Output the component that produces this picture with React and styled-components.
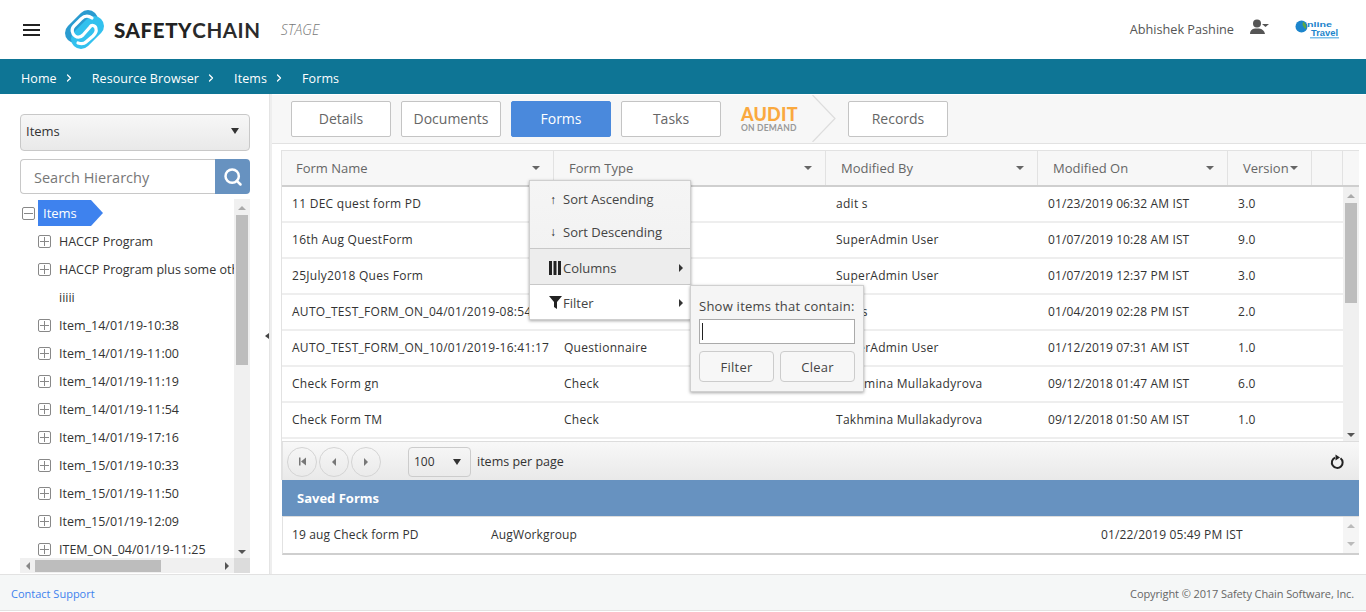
import React from "react";
import styled, { createGlobalStyle } from "styled-components";
import { ChevronRight, Search } from "lucide-react";

const Global = createGlobalStyle`
  html, body { margin: 0; padding: 0; background: #fff; }
  body { font-family: "Open Sans", "Noto Sans", sans-serif; font-size: 13px; color: #333; }
  * { box-sizing: border-box; }
`;

const Page = styled.div`
  width: 1366px;
  height: 612px;
  display: flex;
  flex-direction: column;
  overflow: hidden;
`;

const Header = styled.header`
  height: 59px;
  display: flex;
  align-items: center;
  padding: 0 27px 0 23px;
`;
const Burger = styled.div`
  width: 17px;
  height: 12px;
  margin-right: 24px;
  border-top: 2px solid #222;
  border-bottom: 2px solid #222;
  position: relative;
  &::after {
    content: "";
    position: absolute;
    left: 0;
    right: 0;
    top: 3px;
    height: 2px;
    background: #222;
  }
`;
const Brand = styled.div`
  font-family: "Lato", sans-serif;
  font-size: 20.5px;
  font-weight: 900;
  color: #222;
  margin-left: 9px;
  letter-spacing: 0.6px;
  span { font-weight: 700; color: #2b2b2b; }
`;
const Stage = styled.div`
  font-family: "Open Sans", sans-serif;
  font-style: italic;
  font-size: 14px;
  font-weight: 300;
  color: #777;
  margin-left: 20px;
`;
const UserBox = styled.div`
  margin-left: auto;
  display: flex;
  align-items: center;
  color: #555;
  font-size: 12.7px;
  padding-bottom: 1px;
`;
const UserIcon = styled.svg`
  margin: -4px 26px 0 16px;
`;
const Crumbs = styled.nav`
  height: 35px;
  background: #0e7595;
  display: flex;
  align-items: center;
  padding: 3px 0 0 21px;
  color: #fff;
  font-size: 12.5px;
  letter-spacing: 0.1px;
`;
const Crumb = styled.span`
  display: inline-flex;
  align-items: center;
  svg { margin: 0 17px 0 6px; }
`;

const Main = styled.div`
  flex: 1;
  display: flex;
  min-height: 0;
`;
const Side = styled.aside`
  width: 270px;
  padding: 20px 19px 0 20px;
  display: flex;
  flex-direction: column;
  border-right: 1px solid #e4e4e4;
  position: relative;
  flex-shrink: 0;
`;
const Collapse = styled.div`
  position: absolute;
  left: 265px;
  top: 239px;
  width: 0;
  height: 0;
  border-top: 3px solid transparent;
  border-bottom: 3px solid transparent;
  border-right: 4px solid #444;
`;
const SideSelect = styled.div`
  height: 37px;
  border: 1px solid #c8c8c8;
  border-radius: 4px;
  background: linear-gradient(#f7f7f7, #e9e9e9);
  display: flex;
  align-items: center;
  justify-content: space-between;
  padding: 0 10px 3px 5px;
  font-size: 13px;
`;
const Caret = styled.i`
  width: 0;
  height: 0;
  border-left: 4px solid transparent;
  border-right: 4px solid transparent;
  border-top: 6px solid ${p => p.$c || "#333"};
  display: block;
`;
const SearchRow = styled.div`
  margin-top: 8px;
  height: 35px;
  display: flex;
`;
const SearchInput = styled.div`
  flex: 1;
  border: 1px solid #c8c8c8;
  border-right: none;
  border-radius: 4px 0 0 4px;
  color: #777;
  font-size: 14.5px;
  display: flex;
  align-items: center;
  padding: 1px 0 0 13px;
`;
const SearchBtn = styled.div`
  width: 35px;
  background: #6792c0;
  border-radius: 0 4px 4px 0;
  display: flex;
  align-items: center;
  justify-content: center;
`;
const TreeFrame = styled.div`
  margin-top: 5px;
  height: 374px;
  display: grid;
  grid-template-columns: 214px 16px;
  grid-template-rows: 359px 15px;
`;
const TreeList = styled.div`
  overflow: hidden;
  padding-top: 1px;
`;
const RootRow = styled.div`
  height: 26px;
  display: flex;
  align-items: center;
  padding-left: 2px;
  margin-bottom: 1px;
`;
const TreeRow = styled.div`
  height: 28px;
  display: flex;
  align-items: center;
  padding-left: 18px;
  font-size: 12.5px;
  color: #333;
  white-space: nowrap;
`;
const Plain = styled(TreeRow)`
  padding-left: 39px;
`;
const Toggle = styled.span`
  width: 13px;
  height: 13px;
  border: 1px solid #888;
  border-radius: 2px;
  margin-right: 8px;
  flex-shrink: 0;
  position: relative;
  &::before {
    content: "";
    position: absolute;
    left: 1px;
    right: 1px;
    top: 5px;
    height: 1px;
    background: #888;
  }
  &::after {
    content: "";
    display: ${p => (p.$open ? "none" : "block")};
    position: absolute;
    top: 1px;
    bottom: 1px;
    left: 5px;
    width: 1px;
    background: #888;
  }
`;
const RootLabel = styled.span`
  height: 26px;
  width: 65px;
  margin-left: -5px;
  background: #3e82ee;
  color: #fff;
  font-size: 13px;
  display: flex;
  align-items: center;
  padding-left: 5px;
  clip-path: polygon(0 0, 53px 0, 65px 50%, 53px 100%, 0 100%);
`;
const VBar = styled.div`
  background: #f0f0f0;
  display: flex;
  flex-direction: column;
  align-items: center;
  padding-top: 7px;
  position: relative;
`;
const Thumb = styled.div`
  width: 12px;
  height: ${p => p.$h}px;
  background: #bdbdbd;
  margin-top: 5px;
`;
const Tri = styled.i`
  display: block;
  width: 0;
  height: 0;
  ${p => p.$dir === "up" && `border-left:4px solid transparent;border-right:4px solid transparent;border-bottom:4px solid ${p.$c || "#aaa"};`}
  ${p => p.$dir === "down" && `border-left:4px solid transparent;border-right:4px solid transparent;border-top:4px solid ${p.$c || "#555"};`}
  ${p => p.$dir === "left" && `border-top:4px solid transparent;border-bottom:4px solid transparent;border-right:4px solid ${p.$c || "#888"};`}
  ${p => p.$dir === "right" && `border-top:4px solid transparent;border-bottom:4px solid transparent;border-left:4px solid ${p.$c || "#555"};`}
`;
const DownEnd = styled.div`
  position: absolute;
  bottom: 4px;
`;
const HBar = styled.div`
  background: #f0f0f0;
  display: flex;
  align-items: center;
  padding: 0 5px 0 6px;
  justify-content: space-between;
`;
const HThumb = styled.div`
  width: 126px;
  height: 12px;
  background: #bdbdbd;
  margin: 0 auto 0 5px;
`;
const Corner = styled.div`
  background: #dcdcdc;
`;

const Content = styled.section`
  flex: 1;
  min-width: 0;
  border-left: 2px solid #eee;
  display: flex;
  flex-direction: column;
  position: relative;
`;
const TabStrip = styled.div`
  height: 49px;
  margin-top: 1px;
  background: #f7f7f7;
  border-bottom: 1px solid #e2e2e2;
  padding: 6px 0 0 19px;
  display: flex;
  align-items: flex-start;
  gap: 10px;
`;
const Tab = styled.div`
  width: 100px;
  height: 36px;
  padding-bottom: 2px;
  border: 1px solid ${p => (p.$active ? "#4a89dc" : "#c4c4c4")};
  border-radius: 2px;
  background: ${p => (p.$active ? "#4a89dc" : "#fff")};
  color: ${p => (p.$active ? "#fff" : "#666")};
  font-size: 14px;
  display: flex;
  align-items: center;
  justify-content: center;
`;
const Audit = styled.div`
  margin-left: 10px;
  width: 55px;
  padding-top: 4px;
  font-family: "Lato", sans-serif;
  color: #faa93f;
  font-size: 18px;
  line-height: 18px;
  font-weight: 900;
  letter-spacing: 0.2px;
  small {
    display: block;
    color: #999;
    font-size: 8.5px;
    line-height: 9px;
    font-weight: 700;
    letter-spacing: 0.2px;
    margin-top: 1px;
    white-space: nowrap;
  }
`;
const Arrow = styled.svg`
  margin: -6px 2px 0 6px;
`;

const Grid = styled.div`
  margin: 6px 7px 0 9px;
  border-left: 1px solid #e2e2e2;
  border-top: 1px solid #e2e2e2;
`;
const HeadRow = styled.div`
  height: 36px;
  display: grid;
  grid-template-columns: 272px 272px 212px 190px 84px 31px 16px;
  background: #f7f7f7;
  border-bottom: 2px solid #cfcfcf;
`;
const HeadCell = styled.div`
  display: flex;
  align-items: center;
  justify-content: space-between;
  padding: 0 13px 0 15px;
  border-right: 1px solid #e2e2e2;
  color: #666;
  font-size: 13px;
  &:first-child { padding-left: 14px; }
`;
const SmallCaret = styled.i`
  width: 0;
  height: 0;
  border-left: 4px solid transparent;
  border-right: 4px solid transparent;
  border-top: 4px solid #666;
  display: block;
`;
const Rows = styled.div`
  height: 255px;
  display: flex;
  border-bottom: 1px solid #ddd;
`;
const RowList = styled.div`
  width: 1061px;
`;
const Row = styled.div`
  height: 36px;
  display: grid;
  grid-template-columns: 272px 272px 212px 190px 115px;
  border-bottom: 2px solid #eee;
  align-items: center;
  padding-bottom: 2px;
  font-size: 12px;
  color: #333;
`;
const Cell = styled.div`
  padding-left: 10px;
  white-space: nowrap;
  letter-spacing: 0.28px;
  &:nth-child(4) { letter-spacing: 0.12px; }
`;
const ScrollY = styled.div`
  width: 16px;
  background: #f0f0f0;
  display: flex;
  flex-direction: column;
  align-items: center;
  padding-top: 7px;
  position: relative;
`;
const Pager = styled.div`
  height: 38px;
  background: linear-gradient(#f8f8f8, #e9e9e9);
  display: flex;
  align-items: center;
  padding: 1px 14px 0 4px;
  gap: 2px;
  font-size: 12.5px;
  border-left: 1px solid #e2e2e2;
`;
const RoundBtn = styled.div`
  width: 30px;
  height: 30px;
  border: 1px solid #d4d4d4;
  border-radius: 50%;
  display: flex;
  align-items: center;
  justify-content: center;
  color: #777;
`;
const PageSize = styled.div`
  width: 63px;
  height: 30px;
  margin: 0 4px 0 25px;
  border: 1px solid #ccc;
  border-radius: 4px;
  display: flex;
  align-items: center;
  justify-content: space-between;
  padding: 0 9px 0 5px;
  font-size: 12px;
`;
const Refresh = styled.div`
  margin-left: auto;
  display: flex;
`;
const SavedHead = styled.div`
  height: 36px;
  background: #6792c0;
  color: #fff;
  font-weight: 700;
  font-size: 13px;
  display: flex;
  align-items: center;
  padding-left: 15px;
`;
const SavedWrap = styled.div`
  margin: 0 7px 0 10px;
`;
const SavedBody = styled.div`
  height: 39px;
  display: flex;
  border-bottom: 2px solid #cfcfcf;
  border-left: 1px solid #e2e2e2;
  border-top: 1px solid #ddd;
`;
const SavedRow = styled.div`
  flex: 1;
  display: grid;
  grid-template-columns: 199px 610px 1fr;
  align-items: center;
  font-size: 12px;
  letter-spacing: 0.15px;
  padding: 0 0 2px 9px;
`;
const SavedScroll = styled.div`
  width: 16px;
  background: #f5f5f5;
  display: flex;
  flex-direction: column;
  align-items: center;
  justify-content: center;
  gap: 14px;
`;

const Menu = styled.div`
  position: absolute;
  left: 257px;
  top: 86px;
  width: 162px;
  background: linear-gradient(#f5f5f5, #efefef);
  border: 1px solid #cfcfcf;
  box-shadow: 0 1px 3px rgba(0, 0, 0, 0.35);
  font-size: 13px;
  color: #444;
  z-index: 3;
`;
const MenuItem = styled.div`
  height: ${p => p.$h}px;
  display: flex;
  align-items: center;
  position: relative;
  padding: ${p => p.$pt || 0}px 0 ${p => p.$pb || 0}px 33px;
  white-space: nowrap;
  background: ${p => p.$bg || "transparent"};
  border-top: ${p => (p.$line ? "1px solid #c8c8c8" : "none")};
`;
const MenuGlyph = styled.span`
  position: absolute;
  left: ${p => p.$left}px;
  display: flex;
  font-size: 12px;
  color: #222;
`;
const SubArrow = styled.span`
  position: absolute;
  right: 7px;
`;
const Popup = styled.div`
  position: absolute;
  left: 418px;
  top: 191px;
  width: 174px;
  height: 107px;
  background: #f5f5f5;
  border: 1px solid #d0d0d0;
  box-shadow: 0 1px 3px rgba(0, 0, 0, 0.35);
  padding: 11px 8px 0;
  z-index: 4;
  font-size: 13px;
  letter-spacing: 0.25px;
  color: #444;
  white-space: nowrap;
`;
const PopupInput = styled.div`
  margin-top: 4px;
  height: 25px;
  background: #fff;
  border: 1px solid #aaa;
  padding: 3px 0 3px 2px;
  &::after {
    content: "";
    display: block;
    width: 1px;
    height: 17px;
    background: #222;
  }
`;
const PopupBtns = styled.div`
  margin-top: 7px;
  display: flex;
  gap: 6px;
`;
const PopupBtn = styled.div`
  width: 75px;
  height: 31px;
  border: 1px solid #ccc;
  border-radius: 4px;
  display: flex;
  align-items: center;
  justify-content: center;
  background: #f7f7f7;
`;

const Footer = styled.footer`
  height: 37px;
  margin-bottom: 1px;
  padding: 2px 12px 0 11px;
  background: #f5f7f7;
  border-top: 1px solid #e2e2e2;
  border-bottom: 1px solid #e2e2e2;
  display: flex;
  align-items: center;
  justify-content: space-between;
  font-size: 11px;
  color: #666;
  a { color: #3e82ee; text-decoration: none; }
  span { letter-spacing: -0.1px; }
`;

const Logo = () => (
  <svg width="41" height="41" viewBox="0 0 41 41">
    <path d="M11 24 L24 11" stroke="#2a9bd0" strokeWidth="20" strokeLinecap="round" />
    <path d="M17 30 L30 17" stroke="#33c1ee" strokeWidth="20" strokeLinecap="round" />
    <path
      d="M28 9 C24 6 20 7 17 10 L10 17 C7 20 8 25 11 27 C14 29 17 28 19 26 L26 18 C28 15 32 17 32 20 C33 23 31 25 29 27 L22 33 C20 35 17 35 14 34"
      fill="none"
      stroke="#fff"
      strokeWidth="3.2"
      strokeLinecap="round"
    />
  </svg>
);

const TravelLogo = () => (
  <svg width="44" height="20" viewBox="0 0 44 20">
    <circle cx="6.5" cy="7.5" r="6" fill="#1c85cc" />
    <path d="M8 2.5 Q12 5 11 10 Q9 9 7.5 6 Z" fill="#5aa845" />
    <text x="12" y="7.5" fontSize="8" fontWeight="700" fontFamily="Liberation Sans" fill="#1c85cc" textLength="25" lengthAdjust="spacingAndGlyphs">nline</text>
    <text x="16" y="17" fontSize="8.5" fontWeight="700" fontFamily="Liberation Sans" fill="#1c85cc" textLength="27" lengthAdjust="spacingAndGlyphs">Travel</text>
    <rect x="15" y="18" width="29" height="1.5" fill="#7cc0ea" />
  </svg>
);

const RefreshIcon = () => (
  <svg width="15" height="16" viewBox="0 0 15 16">
    <path d="M10.5 4.2 A5.4 5.4 0 1 1 5 3.6" fill="none" stroke="#222" strokeWidth="2" />
    <path d="M5.5 0.5 L10 3.6 L5.5 6.5 Z" fill="#222" />
  </svg>
);

const treeItems = [
  "HACCP Program",
  "HACCP Program plus some other",
  null,
  "Item_14/01/19-10:38",
  "Item_14/01/19-11:00",
  "Item_14/01/19-11:19",
  "Item_14/01/19-11:54",
  "Item_14/01/19-17:16",
  "Item_15/01/19-10:33",
  "Item_15/01/19-11:50",
  "Item_15/01/19-12:09",
  "ITEM_ON_04/01/19-11:25",
];

const rows = [
  ["11 DEC quest form PD", "", "adit s", "01/23/2019 06:32 AM IST", "3.0"],
  ["16th Aug QuestForm", "", "SuperAdmin User", "01/07/2019 10:28 AM IST", "9.0"],
  ["25July2018 Ques Form", "", "SuperAdmin User", "01/07/2019 12:37 PM IST", "3.0"],
  ["AUTO_TEST_FORM_ON_04/01/2019-08:54", "", "adit s", "01/04/2019 02:28 PM IST", "2.0"],
  ["AUTO_TEST_FORM_ON_10/01/2019-16:41:17", "Questionnaire", "SuperAdmin User", "01/12/2019 07:31 AM IST", "1.0"],
  ["Check Form gn", "Check", "Takhmina Mullakadyrova", "09/12/2018 01:47 AM IST", "6.0"],
  ["Check Form TM", "Check", "Takhmina Mullakadyrova", "09/12/2018 01:50 AM IST", "1.0"],
];

const heads = ["Form Name", "Form Type", "Modified By", "Modified On", "Version"];

export default function App() {
  return (
    <Page>
      <Global />
      <Header>
        <Burger />
        <Logo />
        <Brand>
          SAFETY<span>CHAIN</span>
        </Brand>
        <Stage>STAGE</Stage>
        <UserBox>
          Abhishek Pashine
          <UserIcon width="19" height="16" viewBox="0 0 19 16">
            <circle cx="7" cy="4.5" r="4" fill="#555" />
            <path d="M0 15 Q0 10 5 9.5 L9 9.5 Q14 10 15 15 Z" fill="#555" />
            <path d="M12 5 L19 5 L15.5 8 Z" fill="#555" />
          </UserIcon>
          <TravelLogo />
        </UserBox>
      </Header>
      <Crumbs>
        <Crumb>Home <ChevronRight size={12} strokeWidth={2.5} /></Crumb>
        <Crumb>Resource Browser <ChevronRight size={12} strokeWidth={2.5} /></Crumb>
        <Crumb>Items <ChevronRight size={12} strokeWidth={2.5} /></Crumb>
        <Crumb>Forms</Crumb>
      </Crumbs>
      <Main>
        <Side>
          <SideSelect>
            Items
            <Caret />
          </SideSelect>
          <SearchRow>
            <SearchInput>Search Hierarchy</SearchInput>
            <SearchBtn>
              <Search size={20} color="#fff" strokeWidth={3} />
            </SearchBtn>
          </SearchRow>
          <TreeFrame>
            <TreeList>
              <RootRow>
                <Toggle $open />
                <RootLabel>Items</RootLabel>
              </RootRow>
              {treeItems.map((t, i) =>
                t === null ? (
                  <Plain key={i}>iiiii</Plain>
                ) : (
                  <TreeRow key={i}>
                    <Toggle />
                    {t}
                  </TreeRow>
                )
              )}
            </TreeList>
            <VBar>
              <Tri $dir="up" />
              <Thumb $h={150} />
              <DownEnd>
                <Tri $dir="down" />
              </DownEnd>
            </VBar>
            <HBar>
              <Tri $dir="left" />
              <HThumb />
              <Tri $dir="right" />
            </HBar>
            <Corner />
          </TreeFrame>
          <Collapse />
        </Side>
        <Content>
          <TabStrip>
            <Tab>Details</Tab>
            <Tab>Documents</Tab>
            <Tab $active>Forms</Tab>
            <Tab>Tasks</Tab>
            <Audit>
              AUDIT
              <small>ON DEMAND</small>
            </Audit>
            <Arrow width="24" height="47" viewBox="0 0 24 47">
              <path d="M0.5 0 L23 23.5 L0.5 47" fill="none" stroke="#ddd" strokeWidth="1.2" />
            </Arrow>
            <Tab>Records</Tab>
          </TabStrip>
          <Grid>
            <HeadRow>
              {heads.map(h => (
                <HeadCell key={h}>
                  {h}
                  <SmallCaret />
                </HeadCell>
              ))}
              <HeadCell />
              <div />
            </HeadRow>
            <Rows>
              <RowList>
                {rows.map(r => (
                  <Row key={r[0]}>
                    {r.map((c, i) => (
                      <Cell key={i}>{c}</Cell>
                    ))}
                  </Row>
                ))}
              </RowList>
              <ScrollY>
                <Tri $dir="up" />
                <Thumb $h={100} />
                <DownEnd>
                  <Tri $dir="down" />
                </DownEnd>
              </ScrollY>
            </Rows>
            <Pager>
              <RoundBtn>
                <svg width="9" height="9" viewBox="0 0 9 9">
                  <path d="M1 0.5 H2.5 V8.5 H1 Z M8 0.5 V8.5 L3 4.5 Z" fill="#777" />
                </svg>
              </RoundBtn>
              <RoundBtn>
                <Tri $dir="left" $c="#777" />
              </RoundBtn>
              <RoundBtn>
                <Tri $dir="right" $c="#777" />
              </RoundBtn>
              <PageSize>
                100
                <Caret />
              </PageSize>
              items per page
              <Refresh>
                <RefreshIcon />
              </Refresh>
            </Pager>
          </Grid>
          <SavedWrap>
            <SavedHead>Saved Forms</SavedHead>
            <SavedBody>
              <SavedRow>
                <span>19 aug Check form PD</span>
                <span>AugWorkgroup</span>
                <span>01/22/2019 05:49 PM IST</span>
              </SavedRow>
              <SavedScroll>
                <Tri $dir="up" $c="#bbb" />
                <Tri $dir="down" $c="#bbb" />
              </SavedScroll>
            </SavedBody>
          </SavedWrap>
          <Menu>
            <MenuItem $h={36}>
              <MenuGlyph $left={20}>↑</MenuGlyph>Sort Ascending
            </MenuItem>
            <MenuItem $h={31} $pb={2}>
              <MenuGlyph $left={20}>↓</MenuGlyph>Sort Descending
            </MenuItem>
            <MenuItem $h={36} $line $pt={3} $bg="#ededed">
              <MenuGlyph $left={19}>
                <svg width="12" height="14" viewBox="0 0 12 14">
                  <path d="M0 0 H3 V14 H0 Z M4.5 0 H7.5 V14 H4.5 Z M9 0 H12 V14 H9 Z" fill="#222" />
                </svg>
              </MenuGlyph>
              Columns
              <SubArrow><Tri $dir="right" $c="#333" /></SubArrow>
            </MenuItem>
            <MenuItem $h={35} $line $pt={1} $bg="#fff">
              <MenuGlyph $left={19}>
                <svg width="13" height="13" viewBox="0 0 13 13">
                  <path d="M0 0 H13 L8 6 V13 L5 11 V6 Z" fill="#222" />
                </svg>
              </MenuGlyph>
              Filter
              <SubArrow><Tri $dir="right" $c="#333" /></SubArrow>
            </MenuItem>
          </Menu>
          <Popup>
            Show items that contain:
            <PopupInput />
            <PopupBtns>
              <PopupBtn>Filter</PopupBtn>
              <PopupBtn>Clear</PopupBtn>
            </PopupBtns>
          </Popup>
        </Content>
      </Main>
      <Footer>
        <a href="#support">Contact Support</a>
        <span>Copyright © 2017 Safety Chain Software, Inc.</span>
      </Footer>
    </Page>
  );
}
